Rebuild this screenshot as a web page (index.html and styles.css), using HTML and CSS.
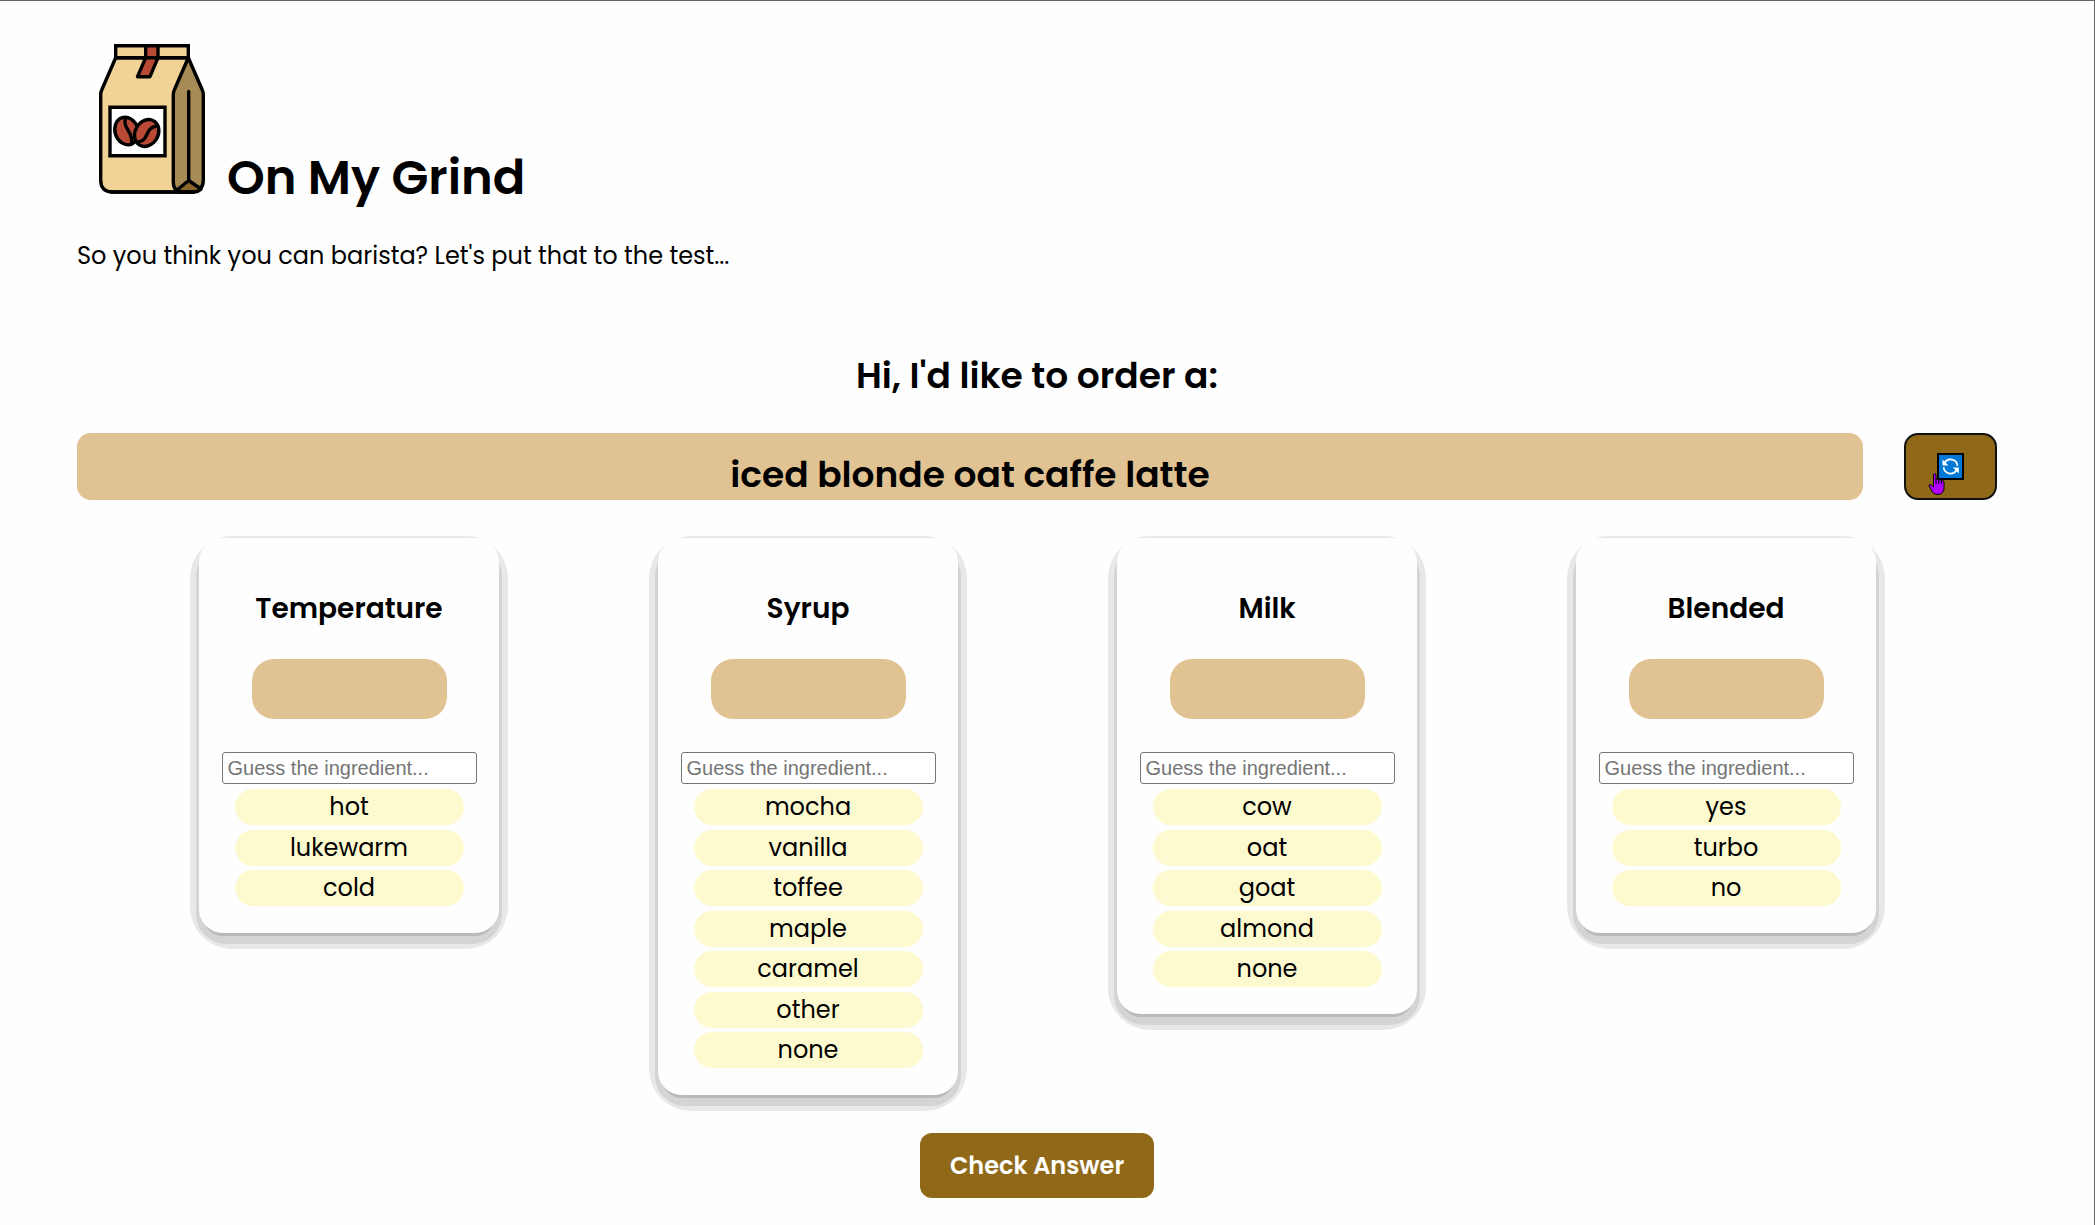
FILE: index.html
```html
<!DOCTYPE html>
<html lang="en">
<head>
<meta charset="utf-8">
<meta name="viewport" content="width=device-width, initial-scale=1">
<title>On My Grind</title>
<link rel="stylesheet" href="styles.css">
</head>
<body>
<header class="masthead">
  <svg class="logo" viewBox="0 0 150 150" role="img" aria-label="Bag of coffee beans">
    <g stroke="#000" stroke-width="3.4" stroke-linejoin="round" stroke-linecap="round">
      <path fill="#f2d397" d="M38.700 13.700 24.700 46q-1 2-1 5v85q0 12 12 12h75.600V13.700z"/>
      <path fill="#a68c54" d="M111.300 13.700 97.300 46q-1 2-1 5v87q0 10 10 10h9q11-1 11-12V51q0-3-1-5z"/>
      <path fill="#8c662a" d="M111.700 136.500 100 146q3 2 6 2h10q5 0 8-3z"/>
      <path fill="none" d="M111.700 47.500V136M34 148h82"/>
      <path fill="#f2d397" stroke-linejoin="miter" d="M38.700 1.700h72.600v12H38.700z"/>
      <path fill="#b94a36" d="M68.700 1.700H81v12H68.700zM68.700 13.700H81L73 32.700H60.500z"/>
      <path fill="#fff" stroke-linejoin="miter" d="M33 63.300h55v48.400H33z"/>
      <ellipse fill="#b94a36" cx="49.500" cy="87" rx="11.500" ry="14" transform="rotate(-18 49.500 87)"/>
      <path fill="none" d="M48.500 74c-3 11 8 13 6.200 26"/>
      <ellipse fill="#b94a36" cx="69.700" cy="89" rx="11.500" ry="14" transform="rotate(30 69.700 89)"/>
      <path fill="none" d="M79.500 82c-12 2-7 14-18 16"/>
    </g>
  </svg>
  <h1 class="title">On My Grind</h1>
</header>
<p class="tagline">So you think you can barista? Let's put that to the test...</p>

<main>
  <h2 class="prompt">Hi, I'd like to order a:</h2>
  <div class="order-row">
    <p class="order">iced blonde oat caffe latte</p>
    <button class="refresh" type="button" aria-label="New order">
      <svg class="refresh-icon" viewBox="0 0 27 27" aria-hidden="true">
        <path fill="#0078d7" stroke="#000" stroke-width="2" d="M1 1h25v25H1z"/>
        <path fill="none" stroke="#fff" stroke-width="1.700" d="M7.600 9.800a7 7 0 0 1 12.900 3M19.500 17.200a7 7 0 0 1-12.900-3"/>
        <path fill="#fff" d="M5.500 6.500v6h6zM21.800 20.500v-6h-6z"/>
      </svg>
      <svg class="pointer" viewBox="0 0 17 22" aria-hidden="true">
        <path fill="#b400ff" stroke="#000" d="M5.500 1.500q1.500-2 2.500 0v5q2-1 2.500.500 2-1 2.700.500 2.300-.500 2.800 1.500v6q0 6-6 6.500-5 0-7-5L.800 12.500q1-2 3 0L5.500 14z"/>
        <path fill="none" stroke="#000" d="M8 6v5M10.700 7v4M13.300 8v3"/>
      </svg>
    </button>
  </div>

  <form class="quiz">
    <div class="cards">
      <section class="card">
        <h3 class="card-title" id="temperature">Temperature</h3>
        <div class="answer"></div>
        <input class="guess" type="text" placeholder="Guess the ingredient..." aria-labelledby="temperature">
        <ul class="options"><li>hot</li><li>lukewarm</li><li>cold</li></ul>
      </section>
      <section class="card">
        <h3 class="card-title" id="syrup">Syrup</h3>
        <div class="answer"></div>
        <input class="guess" type="text" placeholder="Guess the ingredient..." aria-labelledby="syrup">
        <ul class="options"><li>mocha</li><li>vanilla</li><li>toffee</li><li>maple</li><li>caramel</li><li>other</li><li>none</li></ul>
      </section>
      <section class="card">
        <h3 class="card-title" id="milk">Milk</h3>
        <div class="answer"></div>
        <input class="guess" type="text" placeholder="Guess the ingredient..." aria-labelledby="milk">
        <ul class="options"><li>cow</li><li>oat</li><li>goat</li><li>almond</li><li>none</li></ul>
      </section>
      <section class="card">
        <h3 class="card-title" id="blended">Blended</h3>
        <div class="answer"></div>
        <input class="guess" type="text" placeholder="Guess the ingredient..." aria-labelledby="blended">
        <ul class="options"><li>yes</li><li>turbo</li><li>no</li></ul>
      </section>
    </div>
    <button class="check" type="button">Check Answer</button>
  </form>
</main>
</body>
</html>
```
FILE: styles.css
```css
* {
  box-sizing: border-box;
}

body {
  min-height: 100vh;
  margin: 0;
  padding: 43px 97px 24px 77px;
  border-top: 1px solid #666;
  border-right: 1px solid #666;
  background: #fefefe;
  color: #000;
  font-family: Poppins, Inter, sans-serif;
  font-size: 24px;
}

h1, h2, h3, p, ul {
  margin: 0;
  padding: 0;
}

.masthead {
  display: flex;
  align-items: baseline;
}

.logo {
  flex: none;
  width: 150px;
  height: 150px;
}

.title {
  font-size: 48px;
  font-weight: 600;
  line-height: 72px;
}

.tagline {
  margin-top: 24px;
  line-height: 36px;
}

.prompt {
  margin-top: 75px;
  font-size: 36px;
  font-weight: 600;
  line-height: 54px;
  text-align: center;
}

.order-row {
  display: flex;
  gap: 41px;
  margin-top: 30px;
}

.order {
  flex: 1;
  padding-top: 17px;
  border-radius: 14px;
  background: #e1c292;
  font-size: 36px;
  font-weight: 600;
  line-height: 50px;
  text-align: center;
}

.refresh {
  position: relative;
  display: flex;
  align-items: center;
  justify-content: center;
  width: 93px;
  padding: 0;
  border: 2px solid #111;
  border-radius: 14px;
  background: #8f6918;
  cursor: pointer;
}

.refresh-icon {
  width: 27px;
  height: 27px;
}

.pointer {
  position: absolute;
  top: 38px;
  left: 22px;
  width: 17px;
  height: 22px;
}

.cards {
  display: flex;
  flex-wrap: wrap;
  align-items: flex-start;
  justify-content: space-between;
  gap: 40px;
  margin-top: 38px;
  padding: 0 121px 0 122px;
  isolation: isolate;
}

.card {
  position: relative;
  display: flex;
  flex-direction: column;
  align-items: center;
  width: 300px;
  padding: 50px 22px 27px;
  border-radius: 24px;
  background: #fefefe;
  box-shadow: 0 7px 0 -4px #bababa;
}

/* Two stepped bands of shade behind each card */
.card::before,
.card::after {
  content: "";
  position: absolute;
  z-index: -1;
}

.card::before {
  inset: -2px -9px -16px;
  border-radius: 42px;
  background: #e8e8e8;
}

.card::after {
  inset: 8px -3px -11px;
  border-radius: 30px;
  background: #d4d4d4;
}

.card-title {
  font-size: 28px;
  font-weight: 600;
  line-height: 42px;
}

.answer {
  width: 195px;
  height: 60px;
  margin-top: 29px;
  border-radius: 22px;
  background: #e1c292;
}

.guess {
  width: 255px;
  height: 32px;
  margin-top: 33px;
  padding: 0 5px;
  border: 1px solid #767676;
  border-radius: 3px;
  background: #fff;
  font: 20px "Liberation Sans", Arial, sans-serif;
}

.guess::placeholder {
  color: #757575;
}

.options {
  width: 229px;
  margin-top: 5px;
  list-style: none;
  line-height: 36px;
  text-align: center;
}

.options li {
  border-radius: 18px;
  background: #fefad0;
}

.options li:nth-child(even) {
  margin: 5px 0 4px;
}

.check {
  display: block;
  height: 65px;
  margin: 38px auto 0;
  padding: 0 30px;
  border: 0;
  border-radius: 12px;
  background: #8f6918;
  color: #fff;
  font: 600 24px Poppins, Inter, sans-serif;
  cursor: pointer;
}
```
